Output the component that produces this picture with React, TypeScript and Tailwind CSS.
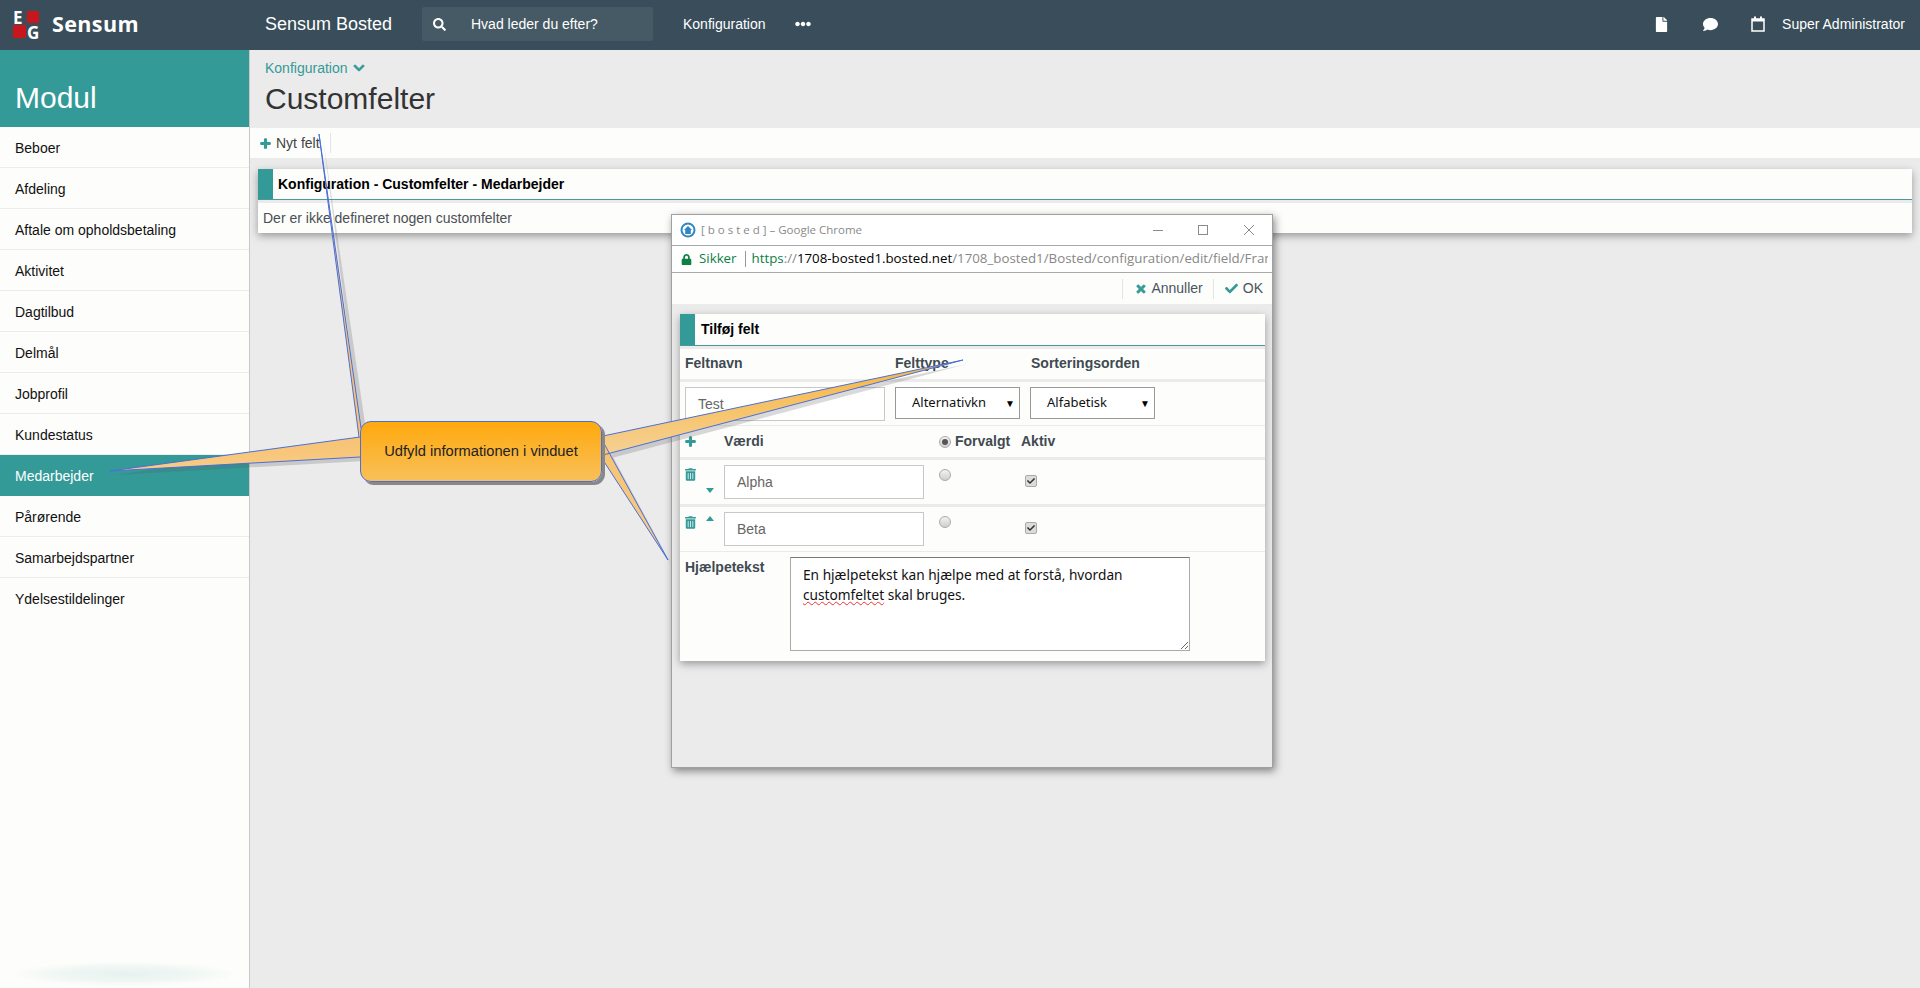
import React from 'react';
import { FaSearch, FaEllipsisH, FaFile, FaComment, FaChevronDown, FaPlus, FaTimes, FaCheck, FaLock, FaTrashAlt } from 'react-icons/fa';

const modules = ['Beboer', 'Afdeling', 'Aftale om opholdsbetaling', 'Aktivitet', 'Dagtilbud', 'Delmål', 'Jobprofil', 'Kundestatus', 'Medarbejder', 'Pårørende', 'Samarbejdspartner', 'Ydelsestildelinger'];

const Logo = () => (
  <div className="flex items-center w-[265px] shrink-0">
    <div className="grid grid-cols-[13px_13px] grid-rows-[13px_13px] ml-[13px] gap-px">
      <span className="text-white font-bold text-[17px] leading-[13px] font-['Open_Sans']">E</span>
      <span className="bg-[#c8161d] w-[12px] h-[12px]" />
      <span className="bg-[#c8161d] w-[13px] h-[13px]" />
      <span className="text-white font-bold text-[17px] leading-[13px] font-['Open_Sans'] pt-px">G</span>
    </div>
    <span className="ml-[12px] text-white font-bold text-[21.5px] tracking-[0.4px] font-['Open_Sans']">Sensum</span>
  </div>
);

const Calendar = () => (
  <svg width="14" height="16" viewBox="0 0 14 16" className="text-white">
    <path d="M1 3h12v12H1z" fill="none" stroke="currentColor" strokeWidth="1.5" />
    <path d="M1 3h12v2.5H1z" fill="currentColor" />
    <path d="M3 0.5h2v4H3zM9 0.5h2v4H9z" fill="currentColor" />
  </svg>
);

const TopBar = () => (
  <div className="h-[50px] pb-[2px] bg-[#394e5a] flex items-center text-white text-[14px] shrink-0">
    <Logo />
    <span className="text-[18px] w-[157px] shrink-0">Sensum Bosted</span>
    <div className="w-[231px] h-[34px] bg-[#465a65] rounded-[2px] flex items-center pl-[11px] shrink-0">
      <FaSearch className="text-[13px]" />
      <span className="ml-[25px]">Hvad leder du efter?</span>
    </div>
    <span className="ml-[30px]">Konfiguration</span>
    <FaEllipsisH className="ml-[29px] text-[16px]" />
    <div className="ml-auto flex items-center pr-[15px]">
      <FaFile className="text-[15px]" />
      <FaComment className="text-[15px] ml-[34px]" />
      <div className="ml-[33px]"><Calendar /></div>
      <span className="ml-[17px]">Super Administrator</span>
    </div>
  </div>
);

const Sidebar = () => (
  <div className="w-[250px] shrink-0 border-r border-[#c8c8c8] bg-[#fdfdfb] flex flex-col">
    <div className="h-[77px] bg-[#339a98] text-white text-[30px] pl-[15px] pt-[25px] leading-[46px]">Modul</div>
    {modules.map((m, i) => (
      <div
        key={m}
        className={m === 'Medarbejder'
          ? 'h-[41px] flex items-center pl-[15px] pt-[2px] text-[14px] text-white bg-[#339a98] border-b border-[#339a98]'
          : i === modules.length - 1
            ? 'h-[41px] flex items-center pl-[15px] pt-[2px] text-[14px] text-[#111]'
            : 'h-[41px] flex items-center pl-[15px] pt-[2px] text-[14px] text-[#111] border-b border-[#ececec]'}
      >
        {m}
      </div>
    ))}
    <div className="mt-auto mb-[2px] mx-[15px] h-[24px] bg-[radial-gradient(ellipse_at_center,#e6f2ef_0%,#f0f7f4_45%,#fdfdfb_72%)]" />
  </div>
);

const Panel = () => (
  <div className="mx-[8px] mt-[11px] shadow-[0_3px_8px_rgba(0,0,0,0.35)] bg-[#ebebeb]">
    <div className="h-[31px] bg-[#fdfdfb] border-b border-[#4a9a98] flex">
      <div className="w-[15px] bg-[#339a98]" />
      <div className="pl-[5px] font-bold text-[14px] leading-[30px] text-black">Konfiguration - Customfelter - Medarbejder</div>
    </div>
    <div className="h-[30px] mt-[3px] bg-[#fdfdfb] pl-[5px] text-[14px] leading-[30px] text-[#4a4f55]">Der er ikke defineret nogen customfelter</div>
  </div>
);

const Radio = ({ checked }: { checked?: boolean }) => (
  <span className="w-[12px] h-[12px] rounded-full border border-[#aaa] bg-[linear-gradient(#f2f2f2,#cfcfcf)] flex items-center justify-center shrink-0">
    {checked && <span className="w-[6px] h-[6px] rounded-full bg-[#555]" />}
  </span>
);

const Check = () => (
  <span className="w-[12px] h-[12px] rounded-[2px] border border-[#aaa] bg-[#dcdcdc] flex items-center justify-center shrink-0">
    <FaCheck className="text-[8px] text-[#333]" />
  </span>
);

const Caret = ({ up }: { up?: boolean }) => (
  <svg width="8" height="5" viewBox="0 0 8 5" className="text-[#339a98]">
    <path d={up ? 'M4 0l4 5H0z' : 'M0 0h8L4 5z'} fill="currentColor" />
  </svg>
);

const Field = ({ value, up }: { value: string; up?: boolean }) => (
  <div className="h-[44px] bg-[#fdfdfb] flex items-start pl-[5px]">
    <FaTrashAlt className={up ? 'w-[11px] h-[13px] mt-[9px] mr-[10px] text-[#339a98]' : 'w-[11px] h-[13px] mt-[8px] mr-[10px] text-[#339a98]'} />
    <div className={up ? 'w-[18px] mt-[9px]' : 'w-[18px] mt-[28px]'}><Caret up={up} /></div>
    <div className="w-[200px] h-[34px] mt-[5px] border border-[#c8c8c8] bg-white pl-[12px] text-[14px] leading-[32px] text-[#666]">{value}</div>
    <div className="ml-[15px] mt-[9px]"><Radio /></div>
    <div className="ml-[74px] mt-[15px]"><Check /></div>
  </div>
);

const Dropdown = ({ value }: { value: string }) => (
  <div className="w-[125px] h-[32px] border border-[#999] bg-white flex items-center pl-[16px] pr-[4px] text-[13px] font-['Noto_Sans'] text-[#111]">
    <span>{value}</span>
    <span className="ml-auto text-[10px] text-black">▼</span>
  </div>
);

const Popup = () => (
  <div className="absolute left-[671px] top-[214px] w-[602px] h-[554px] border border-[#a0a0a0] bg-[#ebebeb] shadow-[2px_3px_8px_rgba(0,0,0,0.45)] flex flex-col">
    <div className="h-[31px] bg-white border-b border-[#a8a8a8] flex items-center pl-[8px] shrink-0">
      <svg width="16" height="16" viewBox="0 0 16 16">
        <circle cx="8" cy="8" r="7.5" fill="#2f86c5" />
        <circle cx="8" cy="8" r="5.5" fill="#ffffff" />
        <path d="M8 4L12 8H10.8v4H5.2V8H4z" fill="#2f86c5" />
      </svg>
      <span className="ml-[5px] text-[11.5px] text-[#8a8a8a] font-['Open_Sans'] whitespace-nowrap">[ b o s t e d ] – Google Chrome</span>
      <div className="ml-auto flex items-center pr-[18px]">
        <span className="w-[10px] h-px bg-[#8a8a8a]" />
        <span className="ml-[35px] w-[10px] h-[10px] border border-[#8a8a8a]" />
        <svg width="10" height="10" viewBox="0 0 10 10" className="ml-[36px]">
          <path d="M0 0l10 10M10 0L0 10" stroke="#8a8a8a" fill="none" />
        </svg>
      </div>
    </div>
    <div className="h-[27px] bg-white border-b border-[#a8a8a8] flex items-center pl-[9px] pr-[4px] shrink-0 font-['Open_Sans'] text-[13.3px] whitespace-nowrap overflow-hidden">
      <FaLock className="text-[11px] text-[#0b8043] shrink-0" />
      <span className="ml-[7px] text-[#0b8043]">Sikker</span>
      <span className="ml-[8px] w-px h-[16px] bg-[#999] shrink-0" />
      <div className="ml-[6px] overflow-hidden">
        <span className="text-[#0b8043]">https</span>
        <span className="text-[#888]">://</span>
        <span className="text-black">1708-bosted1.bosted.net</span>
        <span className="text-[#888]">/1708_bosted1/Bosted/configuration/edit/field/Framework</span>
      </div>
    </div>
    <div className="h-[31px] bg-[#fdfdfb] flex items-center justify-end pr-[9px] text-[14px] text-[#4a5560] shrink-0">
      <span className="w-px h-[20px] bg-[#e4e4e4]" />
      <FaTimes className="ml-[12px] text-[12px] text-[#339a98] stroke-[40]" />
      <span className="ml-[4px]">Annuller</span>
      <span className="ml-[10px] w-px h-[20px] bg-[#e4e4e4]" />
      <FaCheck className="ml-[11px] text-[13px] text-[#339a98]" />
      <span className="ml-[5px]">OK</span>
    </div>
    <div className="mt-[10px] ml-[8px] mr-[7px] shadow-[0_3px_8px_rgba(0,0,0,0.35)] bg-[#ebebeb]">
      <div className="h-[32px] bg-[#fdfdfb] border-b border-[#4a9a98] flex">
        <div className="w-[15px] bg-[#339a98]" />
        <div className="pl-[6px] font-bold text-[14px] leading-[31px] text-black">Tilføj felt</div>
      </div>
      <div className="h-[30px] mt-[3px] pb-[2px] bg-[#fdfdfb] flex items-center pl-[5px] font-bold text-[14px] text-[#3f4a52]">
        <span className="w-[210px]">Feltnavn</span>
        <span className="w-[136px]">Felttype</span>
        <span>Sorteringsorden</span>
      </div>
      <div className="h-[43px] mt-[3px] bg-[#fdfdfb] flex items-start pt-[5px] pl-[5px]">
        <div className="w-[200px] h-[34px] border border-[#c8c8c8] bg-white pl-[12px] text-[14px] leading-[32px] text-[#666]">Test</div>
        <div className="ml-[10px]"><Dropdown value="Alternativkn" /></div>
        <div className="ml-[10px]"><Dropdown value="Alfabetisk" /></div>
      </div>
      <div className="h-[31px] mt-px bg-[#fdfdfb] flex items-center pl-[5px] font-bold text-[14px] text-[#3f4a52]">
        <FaPlus className="w-[11px] h-[11px] mr-[28px] text-[#339a98] stroke-[50]" />
        <span className="w-[215px]">Værdi</span>
        <Radio checked />
        <span className="ml-[4px] w-[66px]">Forvalgt</span>
        <span>Aktiv</span>
      </div>
      <div className="mt-[3px]"><Field value="Alpha" /></div>
      <div className="mt-[3px]"><Field value="Beta" up /></div>
      <div className="h-[109px] mt-px bg-[#fdfdfb] flex items-start pl-[5px] pt-[5px]">
        <span className="w-[105px] font-bold text-[14px] text-[#3f4a52]">Hjælpetekst</span>
        <div className="w-[400px] h-[94px] border border-[#aaa] border-t-[#777] bg-white pl-[12px] pt-[7px] pr-[10px] text-[13.7px] leading-[20px] text-[#111] font-['Noto_Sans'] resize overflow-hidden">
          En hjælpetekst kan hjælpe med at forstå, hvordan <span className="underline decoration-wavy decoration-[#e33] decoration-1">customfeltet</span> skal bruges.
        </div>
      </div>
    </div>
  </div>
);

const Callout = () => (
  <>
    <svg className="absolute left-0 top-0 pointer-events-none" width="1920" height="988" viewBox="0 0 1920 988">
      <defs>
        <linearGradient id="fillA" x1="0" y1="0" x2="0" y2="1">
          <stop offset="0" stopColor="#f9b53c" />
          <stop offset="1" stopColor="#f5d195" />
        </linearGradient>
        <linearGradient id="fillB" x1="0" y1="0" x2="0" y2="1">
          <stop offset="0" stopColor="#f7c372" />
          <stop offset="1" stopColor="#f8cb85" />
        </linearGradient>
      </defs>
      <g fill="#555" opacity="0.22">
        <polygon points="114,475 364,441 364,461" />
        <polygon points="323,138 366,430 362,441" />
        <polygon points="967,364 608,440 608,459" />
        <polygon points="671,564 605,442 605,461" />
      </g>
      <polygon points="110,471 360,437 360,457" fill="url(#fillB)" />
      <polygon points="319,134 359,437 361,428" fill="#f7c372" />
      <polygon points="963,360 603,436 603,455" fill="url(#fillA)" />
      <polygon points="668,560 601,438 601,457" fill="url(#fillB)" />
      <g fill="none" stroke="#4a6fd8" strokeWidth="1">
        <polyline points="360,437 110,471 360,457" />
        <polyline points="359,437 319,134 361,428" />
        <polyline points="603,436 963,360 603,455" />
        <polyline points="601,438 668,560 601,457" />
      </g>
    </svg>
    <div className="absolute left-[360px] top-[421px] w-[242px] h-[61px] rounded-[11px] border border-[#4a6fd8] bg-[linear-gradient(#ffa90d,#f8c05a)] shadow-[3px_3px_0_#888] flex items-center justify-center text-[14.7px] text-[#222]">
      Udfyld informationen i vinduet
    </div>
  </>
);

export default function App() {
  return (
    <div className="relative w-full h-[988px] overflow-hidden bg-[#ebebeb] flex flex-col font-['Liberation_Sans',Arial,sans-serif]">
      <TopBar />
      <div className="flex flex-1 min-h-0">
        <Sidebar />
        <div className="flex-1 min-w-0">
          <div className="h-[78px] pl-[15px] pt-[9px]">
            <div className="flex items-center text-[14px] text-[#339a98] leading-[18px]">
              Konfiguration
              <FaChevronDown className="ml-[5px] text-[12px] stroke-[40]" />
            </div>
            <h1 className="text-[30px] text-[#333] leading-[40px] mt-[2px]">Customfelter</h1>
          </div>
          <div className="h-[30px] bg-[#fdfdfb] flex items-center pl-[10px] text-[14px] text-[#444]">
            <FaPlus className="w-[11px] h-[11px] text-[#339a98] stroke-[50]" />
            <span className="ml-[5px]">Nyt felt</span>
            <span className="ml-[10px] w-px h-[20px] bg-[#e4e4e4]" />
          </div>
          <Panel />
        </div>
      </div>
      <Popup />
      <Callout />
    </div>
  );
}
